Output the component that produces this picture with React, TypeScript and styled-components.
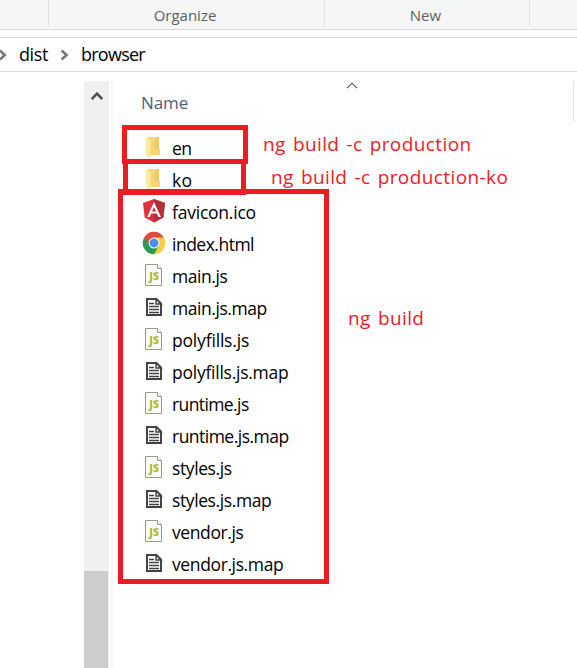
import React from "react";
import styled, { createGlobalStyle } from "styled-components";

const GlobalStyle = createGlobalStyle`
  * { box-sizing: border-box; }
  body { margin: 0; background: #fff; font-family: "Open Sans", "Noto Sans", sans-serif; }
`;

const Window = styled.div`
  position: relative;
  display: flex;
  flex-direction: column;
  width: 577px;
  height: 668px;
  overflow: hidden;
  background: #fff;
`;

const Ribbon = styled.div`
  display: flex;
  height: 30px;
  flex: none;
  background: #f5f6f7;
  border-bottom: 1px solid #d9dadb;
`;

const RibbonGroup = styled.div<{ $width: number }>`
  width: ${(p) => p.$width}px;
  height: 26px;
  flex: none;
  border-right: 1px solid #dfe1e3;
  padding: 5px 3px 0 0;
  text-align: center;
  font-size: 15px;
  line-height: 21px;
  color: #5f5f5f;
`;

const AddressBar = styled.div`
  display: flex;
  align-items: center;
  flex: none;
  height: 35px;
  margin-top: 7px;
  padding-bottom: 1px;
  border-top: 1px solid #d9d9d9;
  border-bottom: 1px solid #d9d9d9;
  font-size: 18px;
  color: #000;
`;

const Crumb = styled.span<{ $width: number; $spacing: number }>`
  width: ${(p) => p.$width}px;
  line-height: 24px;
  letter-spacing: ${(p) => p.$spacing}px;
  white-space: nowrap;
`;

const CrumbArrow = styled.svg<{ $gap: number }>`
  width: 8px;
  height: 12px;
  flex: none;
  margin: 1px ${(p) => p.$gap}px 0 0;
`;

const Body = styled.div`
  display: flex;
  flex: 1;
  padding: 9px 0 0 84px;
`;

const Scrollbar = styled.div`
  display: flex;
  flex-direction: column;
  justify-content: space-between;
  width: 25px;
  flex: none;
  padding-top: 10px;
  background: #f0f0f0;
`;

const ScrollArrow = styled.svg`
  width: 12px;
  height: 10px;
  margin-left: 6.5px;
`;

const Thumb = styled.div`
  width: 24px;
  height: 97px;
  background: #cdcdcd;
`;

const FileList = styled.div`
  flex: 1;
  margin-left: 2px;
  border-left: 2px solid #f7f7f7;
`;

const ColumnHeader = styled.div`
  display: flex;
  height: 41px;
  width: 461px;
  margin-bottom: 10px;
  padding: 9px 0 0 28px;
  border-right: 1px solid #e5e5e5;
  font-size: 17px;
  line-height: 25px;
  color: #4c607a;
`;

const HeaderLabel = styled.span`
  width: 205px;
  letter-spacing: -0.1px;
`;

const SortMark = styled.svg`
  width: 12px;
  height: 7px;
  margin-top: -8px;
`;

const Row = styled.div`
  display: flex;
  align-items: center;
  height: 32px;
  padding-left: 29px;
`;

const IconCell = styled.span`
  width: 24px;
  height: 24px;
  margin: -2px 6px 0 0;
  svg { display: block; }
`;

const FileName = styled.span<{ $spacing: number }>`
  font-size: 17.5px;
  line-height: 24px;
  letter-spacing: ${(p) => p.$spacing}px;
  color: #000;
`;

const Frame = styled.div<{ $x: number; $y: number; $w: number; $h: number }>`
  position: absolute;
  left: ${(p) => p.$x}px;
  top: ${(p) => p.$y}px;
  width: ${(p) => p.$w}px;
  height: ${(p) => p.$h}px;
  border: 5px solid #ed1c24;
`;

const Note = styled.div<{ $x: number; $y: number }>`
  position: absolute;
  left: ${(p) => p.$x}px;
  top: ${(p) => p.$y}px;
  font-size: 19px;
  line-height: 26px;
  letter-spacing: 0.4px;
  word-spacing: 1.8px;
  white-space: nowrap;
  color: #ed1c24;
`;

type Kind = "folder" | "angular" | "chrome" | "js" | "doc";

const JsLabel = styled.text`
  font: 800 10.5px "Open Sans", sans-serif;
  fill: #b5b835;
`;

function FileIcon({ kind }: { kind: Kind }) {
  switch (kind) {
    case "folder":
      return (
        <svg width="24" height="24" viewBox="0 0 24 24">
          <path d="M6 2h11v12h1v6H7z" fill="#f5d575" />
          <path d="M13 2h4v12h-4z" fill="#eecb68" />
          <path d="M4 2l4.5 2.6V23L4 20.5z" fill="#ffe9a6" />
        </svg>
      );
    case "angular":
      return (
        <svg width="24" height="24" viewBox="0 0 24 24">
          <path d="M12 0L23 4l-1.7 14.5L12 23.6l-9.3-5.1L1 4z" fill="#dd3039" />
          <path d="M12 0L23 4l-1.7 14.5L12 23.6z" fill="#b52e38" />
          <path d="M12 3L5.1 18h2.6l1.4-3.5h5.8l1.4 3.5h2.6zm0 4.9l2 4.6h-4z" fill="#fff" />
        </svg>
      );
    case "chrome":
      return (
        <svg width="24" height="24" viewBox="0 0 24 24">
          <circle cx="12" cy="12" r="11.2" fill="#ffce44" />
          <path d="M12 12L2.3 6.4A11.2 11.2 0 0 0 12 23.2L17 14.6z" fill="#249b58" />
          <path d="M2.3 6.4A11.2 11.2 0 0 1 21.7 6.4H12L7.2 14.8z" fill="#dc4b3f" />
          <circle cx="12" cy="12" r="5.5" fill="#f4f6f5" />
          <circle cx="12" cy="12" r="4.4" fill="#4889f2" />
        </svg>
      );
    case "js":
      return (
        <svg width="24" height="24" viewBox="0 0 24 24">
          <path d="M3.5 1.5h12l4 4v17h-16z" fill="#fafaf8" stroke="#979797" />
          <path d="M15.5 1.5v4h4" fill="#fff" stroke="#979797" />
          <JsLabel x="7.2" y="17">JS</JsLabel>
        </svg>
      );
    default:
      return (
        <svg width="24" height="24" viewBox="0 0 24 24">
          <path d="M5 4h9.5L19 8.5V20H5z" fill="#fff" stroke="#444" strokeWidth="2" />
          <path d="M14 4v5h5z" fill="#fff" stroke="#444" strokeWidth="1.5" />
          <path d="M7 8.5h5M7 11.5h10M7 14.5h10M7 17.5h10" stroke="#444" strokeWidth="1.5" />
        </svg>
      );
  }
}

const files: { name: string; kind: Kind; spacing: number }[] = [
  { name: "en", kind: "folder", spacing: -0.7 },
  { name: "ko", kind: "folder", spacing: 0.2 },
  { name: "favicon.ico", kind: "angular", spacing: -0.22 },
  { name: "index.html", kind: "chrome", spacing: -0.5 },
  { name: "main.js", kind: "js", spacing: -0.45 },
  { name: "main.js.map", kind: "doc", spacing: -0.45 },
  { name: "polyfills.js", kind: "js", spacing: -0.18 },
  { name: "polyfills.js.map", kind: "doc", spacing: -0.25 },
  { name: "runtime.js", kind: "js", spacing: -0.6 },
  { name: "runtime.js.map", kind: "doc", spacing: -0.52 },
  { name: "styles.js", kind: "js", spacing: -0.4 },
  { name: "styles.js.map", kind: "doc", spacing: -0.4 },
  { name: "vendor.js", kind: "js", spacing: -0.4 },
  { name: "vendor.js.map", kind: "doc", spacing: -0.38 },
];

export default function App() {
  return (
    <Window>
      <GlobalStyle />
      <Ribbon>
        <RibbonGroup $width={49} />
        <RibbonGroup $width={276}>Organize</RibbonGroup>
        <RibbonGroup $width={205}>New</RibbonGroup>
      </Ribbon>
      <AddressBar>
        <CrumbArrow $gap={11} viewBox="0 0 8 12"><path d="M0 1.5L4.8 6L0 10.5" fill="none" stroke="#777" strokeWidth="2.6" /></CrumbArrow>
        <Crumb $width={42} $spacing={-0.4}>dist</Crumb>
        <CrumbArrow $gap={12} viewBox="0 0 8 12"><path d="M0.6 1.5L5.6 6L0.6 10.5" fill="none" stroke="#777" strokeWidth="2.6" /></CrumbArrow>
        <Crumb $width={70} $spacing={-0.75}>browser</Crumb>
      </AddressBar>
      <Body>
        <Scrollbar>
          <ScrollArrow viewBox="0 0 12 10"><path d="M0.7 8.2L6 2.6L11.3 8.2" fill="none" stroke="#505050" strokeWidth="2.6" /></ScrollArrow>
          <Thumb />
        </Scrollbar>
        <FileList>
          <ColumnHeader>
            <HeaderLabel>Name</HeaderLabel>
            <SortMark viewBox="0 0 12 7"><path d="M1 6.2L6 1.2L11 6.2" fill="none" stroke="#555" strokeWidth="1.1" /></SortMark>
          </ColumnHeader>
          {files.map((f) => (
            <Row key={f.name}>
              <IconCell><FileIcon kind={f.kind} /></IconCell>
              <FileName $spacing={f.spacing}>{f.name}</FileName>
            </Row>
          ))}
        </FileList>
      </Body>
      <Note $x={263} $y={131}>ng build -c production</Note>
      <Note $x={271} $y={164}>ng build -c production-ko</Note>
      <Note $x={348} $y={305}>ng build</Note>
      <Frame $x={122} $y={125} $w={126} $h={39} />
      <Frame $x={123} $y={159} $w={123} $h={36} />
      <Frame $x={118} $y={189} $w={211} $h={395} />
    </Window>
  );
}
